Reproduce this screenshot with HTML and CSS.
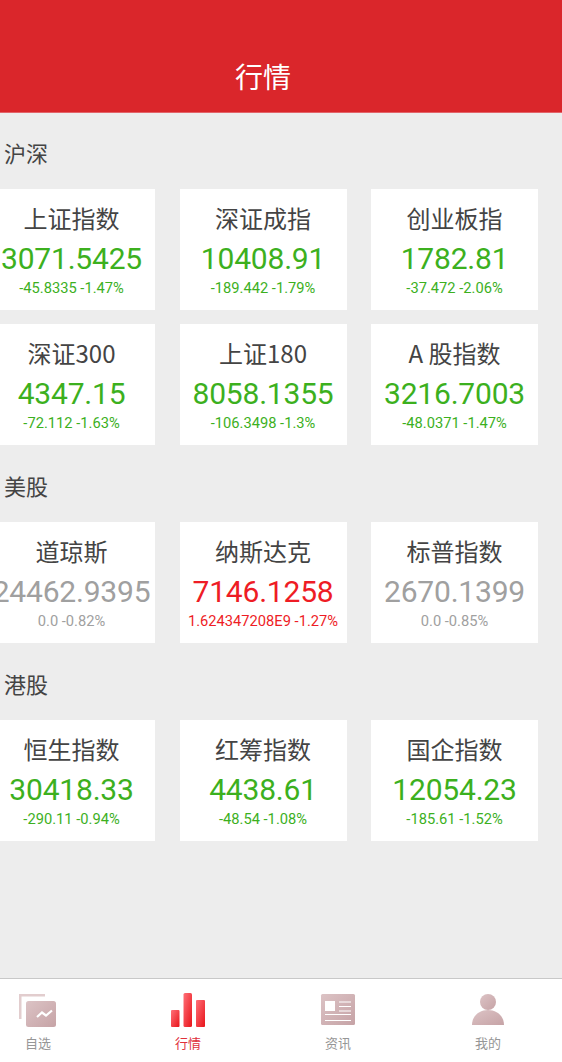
FILE: index.html
```html
<!DOCTYPE html>
<html lang="zh">
<head>
<meta charset="utf-8">
<title>行情</title>
<link rel="stylesheet" href="styles.css">
</head>
<body>
<div class="app">
  <header class="topbar"><h1>行情</h1></header>
  <main class="content">
    <section class="market">
      <h2>沪深</h2>
      <div class="grid">
        <div class="card up"><div class="name">上证指数</div><div class="price">3071.5425</div><div class="delta">-45.8335 -1.47%</div></div>
        <div class="card up"><div class="name">深证成指</div><div class="price">10408.91</div><div class="delta">-189.442 -1.79%</div></div>
        <div class="card up"><div class="name">创业板指</div><div class="price">1782.81</div><div class="delta">-37.472 -2.06%</div></div>
        <div class="card up"><div class="name">深证300</div><div class="price">4347.15</div><div class="delta">-72.112 -1.63%</div></div>
        <div class="card up"><div class="name">上证180</div><div class="price">8058.1355</div><div class="delta">-106.3498 -1.3%</div></div>
        <div class="card up"><div class="name">A 股指数</div><div class="price">3216.7003</div><div class="delta">-48.0371 -1.47%</div></div>
      </div>
    </section>
    <section class="market">
      <h2>美股</h2>
      <div class="grid">
        <div class="card flat"><div class="name">道琼斯</div><div class="price">24462.9395</div><div class="delta">0.0 -0.82%</div></div>
        <div class="card down"><div class="name">纳斯达克</div><div class="price">7146.1258</div><div class="delta">1.624347208E9 -1.27%</div></div>
        <div class="card flat"><div class="name">标普指数</div><div class="price">2670.1399</div><div class="delta">0.0 -0.85%</div></div>
      </div>
    </section>
    <section class="market">
      <h2>港股</h2>
      <div class="grid">
        <div class="card up"><div class="name">恒生指数</div><div class="price">30418.33</div><div class="delta">-290.11 -0.94%</div></div>
        <div class="card up"><div class="name">红筹指数</div><div class="price">4438.61</div><div class="delta">-48.54 -1.08%</div></div>
        <div class="card up"><div class="name">国企指数</div><div class="price">12054.23</div><div class="delta">-185.61 -1.52%</div></div>
      </div>
    </section>
  </main>
  <nav class="tabbar">
    <div class="tab">
      <svg class="icon" viewBox="0 0 40 36" aria-hidden="true">
        <defs>
          <linearGradient id="pink" x1="0" y1="0" x2="1" y2="1"><stop offset="0" stop-color="#dcc3c5"/><stop offset="1" stop-color="#c6a3a6"/></linearGradient>
          <linearGradient id="red" x1="0" y1="0" x2="1" y2="1"><stop offset="0" stop-color="#ff7078"/><stop offset="1" stop-color="#e8141a"/></linearGradient>
        </defs>
        <path d="M1 27V2h26v2.500H3.500V27z" fill="#e2cdce"/>
        <rect x="8" y="9" width="30" height="26" rx="2.500" fill="url(#pink)"/>
        <path d="M19 25l5-4.500 4 3 6-5" fill="none" stroke="#fff" stroke-width="2.200"/>
      </svg>
      <span>自选</span>
    </div>
    <div class="tab active">
      <svg class="icon" viewBox="0 0 40 36" aria-hidden="true">
        <rect x="3" y="18" width="8.500" height="17" rx="1" fill="url(#red)"/>
        <rect x="15.500" y="1" width="8.500" height="34" rx="1.500" fill="url(#red)"/>
        <rect x="28" y="8" width="9" height="27" rx="1" fill="url(#red)"/>
      </svg>
      <span>行情</span>
    </div>
    <div class="tab">
      <svg class="icon" viewBox="0 0 40 36" aria-hidden="true">
        <rect x="3" y="2" width="34" height="31" rx="1.500" fill="url(#pink)"/>
        <rect x="7" y="9" width="10" height="10" fill="#fff"/>
        <path d="M21 10h12M21 14.500h12M21 19h12M7 22.500h26M7 28.500h26" stroke="#fff" stroke-width="1.200"/>
      </svg>
      <span>资讯</span>
    </div>
    <div class="tab">
      <svg class="icon" viewBox="0 0 40 36" aria-hidden="true">
        <circle cx="20" cy="10" r="8" fill="url(#pink)"/>
        <path d="M4 33c0-9 7-15 16-15s16 6 16 15z" fill="url(#pink)"/>
      </svg>
      <span>我的</span>
    </div>
  </nav>
</div>
</body>
</html>
```
FILE: styles.css
```css
* { box-sizing: border-box; margin: 0; padding: 0; }
html, body { width: 562px; height: 1062px; overflow: hidden; }
body { font-family: "Noto Sans CJK SC", Roboto, sans-serif; background: #ededed; }
.app { display: flex; flex-direction: column; height: 1062px; overflow: hidden; }
.topbar { flex: none; height: 113px; background: #da262b; border-bottom: 1px solid #e2646a; padding: 55px 36px 0 0; text-align: center; }
.topbar h1 { font-size: 28px; line-height: 42px; font-weight: 400; color: #fff; }
.content { flex: 1; }
.market h2 { padding: 22px 0 20px 4px; font-size: 22px; line-height: 34px; font-weight: 400; color: #444; }
.market + .market h2 { padding: 23px 0 20px 4px; }
.grid { display: grid; grid-template-columns: repeat(3, 167px); column-gap: 24.500px; row-gap: 14px; margin-left: -12px; width: 600px; }
.card { height: 121px; background: #fff; text-align: center; white-space: nowrap; display: flex; flex-direction: column; align-items: center; }
.name { margin-top: 11px; font-size: 24px; line-height: 36px; }
.price { margin-top: 4px; font-family: Roboto, sans-serif; font-size: 30px; line-height: 38px; letter-spacing: -0.2px; }
.delta { margin-top: 0; font-family: Roboto, sans-serif; font-size: 14.700px; line-height: 20px; }
.up { color: #3cb01e; }
.down { color: #ee1c25; }
.flat { color: #a0a0a0; }
.card .name { color: #444; }
.tabbar { flex: none; height: 84px; width: 600px; margin-left: -37px; display: grid; grid-template-columns: repeat(4, 150px); background: #fff; border-top: 1px solid #c8c8c8; }
.tab { display: flex; flex-direction: column; align-items: center; padding-top: 13px; color: #969696; font-size: 13px; line-height: 20px; }
.tab.active { color: #e0303a; }
.icon { width: 40px; height: 36px; display: block; margin-bottom: 5px; }
```
